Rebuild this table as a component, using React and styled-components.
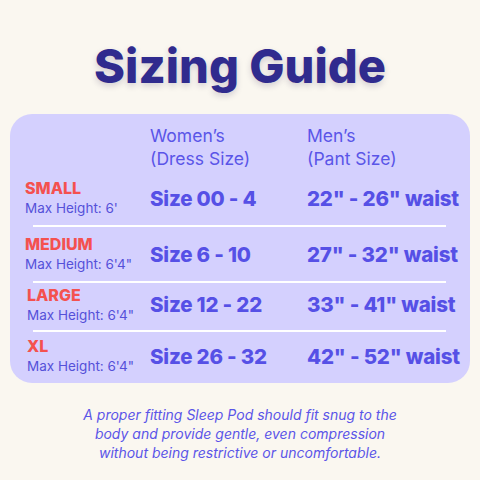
import React from 'react';
import styled, { createGlobalStyle } from 'styled-components';

const GlobalStyle = createGlobalStyle`
  html, body {
    margin: 0;
    padding: 0;
    background: #faf7f0;
  }
  body {
    font-family: Inter, "Noto Sans", sans-serif;
  }
`;

const Page = styled.div`
  width: 480px;
  height: 480px;
  box-sizing: border-box;
  padding-top: 38px;
  display: flex;
  flex-direction: column;
  align-items: center;
`;

const Title = styled.h1`
  margin: 0;
  font-size: 47px;
  line-height: 56px;
  font-weight: 800;
  letter-spacing: 0;
  color: #302b8e;
  text-shadow: 0 3px 6px rgba(40, 30, 80, 0.18);
`;

const Card = styled.div`
  margin-top: 20px;
  width: 460px;
  box-sizing: border-box;
  background: #d4d0fe;
  border-radius: 22px;
  padding: 9px 0 0;
  height: 269px;
`;

const Row = styled.div`
  box-sizing: border-box;
  display: grid;
  grid-template-columns: 125px 157px 1fr;
  align-items: center;
  padding-left: 15px;
  height: ${(p) => p.h}px;
  padding-bottom: ${(p) => p.lift || 0}px;
`;

const Head = styled.div`
  color: #5a55e8;
  font-size: 17.5px;
  font-weight: 400;
  line-height: 23px;
`;

const Label = styled.div`
  display: flex;
  flex-direction: column;
  padding-left: ${(p) => p.shift || 0}px;
`;

const SizeName = styled.span`
  color: #f4514f;
  font-size: 16px;
  font-weight: 800;
  line-height: 20px;
`;

const MaxHeight = styled.span`
  color: #5550d9;
  font-size: 13.5px;
  font-weight: 400;
  line-height: 20px;
`;

const Value = styled.div`
  color: #5650e6;
  font-size: 20.5px;
  font-weight: 800;
  letter-spacing: -0.2px;
`;

const Divider = styled.div`
  height: 2px;
  margin: 0 24px 0 23px;
  background: #ffffff;
`;

const Note = styled.p`
  margin: 22px 0 0;
  text-align: center;
  color: #5a55e8;
  font-size: 14px;
  line-height: 19px;
  font-style: italic;
  font-weight: 400;
`;

const rows = [
  { name: 'SMALL', max: "Max Height: 6'", women: 'Size 00 - 4', men: '22" - 26" waist', h: 54 },
  { name: 'MEDIUM', max: 'Max Height: 6\'4"', women: 'Size 6 - 10', men: '27" - 32" waist', h: 54 },
  { name: 'LARGE', max: 'Max Height: 6\'4"', women: 'Size 12 - 22', men: '33" - 41" waist', h: 47, shift: 2, lift: 4 },
  { name: 'XL', max: 'Max Height: 6\'4"', women: 'Size 26 - 32', men: '42" - 52" waist', h: 50, shift: 2, lift: 2 },
];

export default function App() {
  return (
    <>
      <GlobalStyle />
      <Page>
        <Title>Sizing Guide</Title>
        <Card>
          <Row h={48}>
            <div />
            <Head>Women’s<br />(Dress Size)</Head>
            <Head>Men’s<br />(Pant Size)</Head>
          </Row>
          {rows.map((r, i) => (
            <React.Fragment key={r.name}>
              {i > 0 && <Divider />}
              <Row h={r.h} lift={r.lift}>
                <Label shift={r.shift}>
                  <SizeName>{r.name}</SizeName>
                  <MaxHeight>{r.max}</MaxHeight>
                </Label>
                <Value>{r.women}</Value>
                <Value>{r.men}</Value>
              </Row>
            </React.Fragment>
          ))}
        </Card>
        <Note>
          A proper fitting Sleep Pod should fit snug to the
          <br />
          body and provide gentle, even compression
          <br />
          without being restrictive or uncomfortable.
        </Note>
      </Page>
    </>
  );
}
